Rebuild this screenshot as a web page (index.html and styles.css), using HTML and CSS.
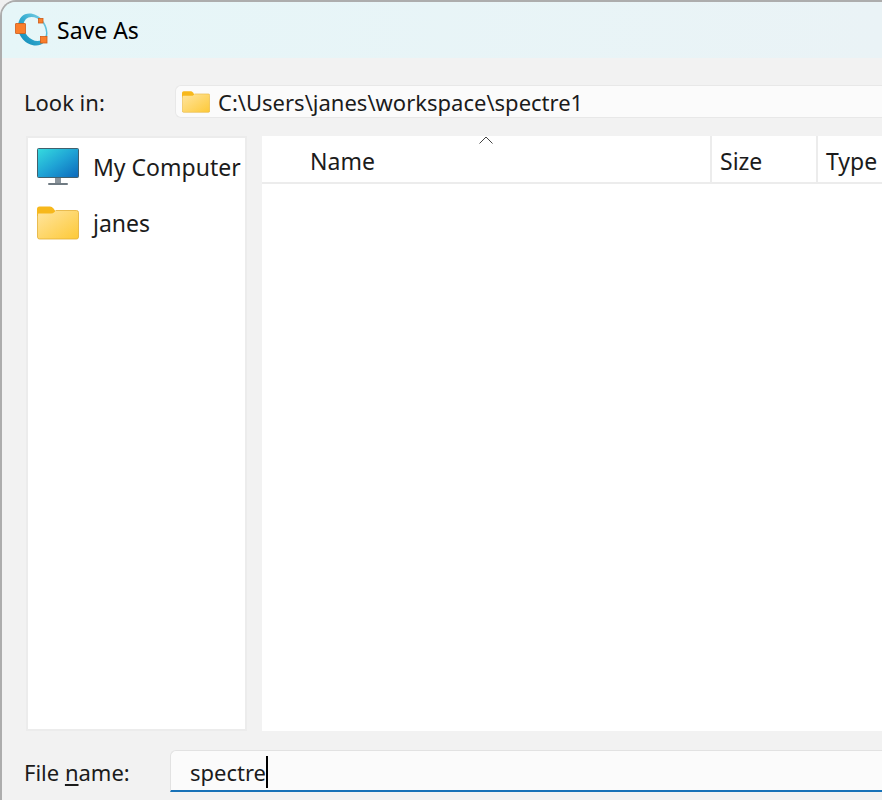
FILE: index.html
```html
<!DOCTYPE html>
<html lang="en">
<head>
<meta charset="utf-8">
<title>Save As</title>
<link rel="stylesheet" href="styles.css">
</head>
<body>
<svg class="defs" width="0" height="0" aria-hidden="true">
  <defs>
    <linearGradient id="folder-front" x1="0" y1="0" x2="1" y2="1">
      <stop offset="0" stop-color="#ffe5a0"/>
      <stop offset="1" stop-color="#fdc937"/>
    </linearGradient>
    <linearGradient id="screen" x1="0" y1="0" x2="1" y2="1">
      <stop offset="0" stop-color="#35dcdf"/>
      <stop offset="0.5" stop-color="#1fa3d5"/>
      <stop offset="1" stop-color="#0c68bb"/>
    </linearGradient>
    <linearGradient id="ring" x1="0" y1="1" x2="1" y2="0">
      <stop offset="0" stop-color="#0b86b4"/>
      <stop offset="0.5" stop-color="#35acd0"/>
      <stop offset="1" stop-color="#8ed8ea"/>
    </linearGradient>
    <symbol id="folder" viewBox="0 0 42 34">
      <path d="M0 9V3Q0 .5 2.500 .5H13Q15 .5 16.500 2.500L19 6V10H0Z" fill="#f7b81c"/>
      <path d="M.5 8.500Q.5 7.500 2 7.500H14Q16 7.500 17.500 6L19 4.500H39.500Q41.500 4.500 41.500 6.500V31Q41.500 33 39.500 33H2.500Q.5 33 .5 31Z" fill="url(#folder-front)"/>
      <path d="M18.500 4.500H39.500Q41.500 4.500 41.500 6.500V31Q41.500 33 39.500 33H2.500Q.5 33 .5 31V8" fill="none" stroke="#e3ae33" stroke-width=".8"/>
    </symbol>
  </defs>
</svg>
<main class="dialog">
  <header class="titlebar">
    <svg class="logo" viewBox="0 0 34 34" aria-hidden="true">
      <path fill-rule="evenodd" fill="url(#ring)" d="M3 13C3.500 5 8 .5 14.500 .5C24 .5 32.500 10 32.500 20C32.500 28 27.500 32.500 21 32.500C11 32.500 2.500 23 3 13ZM8.500 11.500C8 20 15 28 22.500 28C28 28 31 25 31 19.500C30.500 11 24 4 16.500 4C12 4 9 7 8.500 11.500Z"/>
      <g fill="#fb7e2b" stroke="#cf5c18" stroke-width=".8">
        <rect x=".5" y="10.500" width="10" height="10" rx=".5"/>
        <rect x="23.500" y="5.500" width="4.500" height="4.500"/>
        <rect x="25.500" y="23.500" width="6.500" height="6.500"/>
      </g>
    </svg>
    <h1>Save As</h1>
  </header>
  <form class="form">
    <div class="row look-row">
      <label for="look">Look in:</label>
      <div class="look-field">
        <svg class="small-folder" viewBox="0 0 42 34" preserveAspectRatio="none" aria-hidden="true"><use href="#folder"/></svg>
        <select id="look"><option>C:\Users\janes\workspace\spectre1</option></select>
      </div>
    </div>
    <div class="panels">
      <nav class="places" aria-label="Places">
        <button type="button" class="place">
          <svg viewBox="0 0 42 38" aria-hidden="true">
            <path d="M18 29H24V36H18Z" fill="#8b949b"/>
            <rect x=".5" y=".5" width="41" height="29" rx="1" fill="url(#screen)" stroke="#41606d"/>
            <rect x="11" y="35" width="20" height="2" rx="1" fill="#6f7a82"/>
          </svg>
          <span>My Computer</span>
        </button>
        <button type="button" class="place">
          <svg viewBox="0 0 42 34" aria-hidden="true"><use href="#folder"/></svg>
          <span>janes</span>
        </button>
      </nav>
      <div class="files">
        <table>
          <thead>
            <tr>
              <th class="name" aria-sort="ascending">Name
                <svg class="sort" viewBox="0 0 14 8" aria-hidden="true"><path d="M.5 7.500L7 1L13.500 7.500" fill="none" stroke="#444"/></svg>
              </th>
              <th class="size">Size</th>
              <th class="type">Type</th>
            </tr>
          </thead>
        </table>
      </div>
    </div>
    <div class="row name-row">
      <label for="file">File <u>n</u>ame:</label>
      <div class="name-field"><input id="file" type="text" value="spectre" size="7"></div>
    </div>
  </form>
</main>
</body>
</html>
```
FILE: styles.css
```css
* {
  box-sizing: border-box;
}

body {
  margin: 0;
  background: #f0f0f0;
  color: #1b1b1b;
  font: 23px/32px "Noto Sans", "Open Sans", sans-serif;
  overflow: hidden;
}

.defs {
  position: absolute;
}

.dialog {
  display: flex;
  flex-direction: column;
  height: 100vh;
  border: 2px solid #adadad;
  border-width: 2px 0 0 2px;
  border-radius: 16px 0 0 0;
  background: #f2f2f2;
  overflow: hidden;
}

.titlebar {
  display: flex;
  align-items: center;
  gap: 8px;
  height: 56px;
  padding-left: 13px;
  background: linear-gradient(90deg, #e6f6f8, #eaf3f6);
}

.logo {
  width: 34px;
  height: 34px;
}

h1 {
  margin: 0;
  color: #000;
  font-size: 23px;
  font-weight: 400;
}

.form {
  flex: 1;
  display: flex;
  flex-direction: column;
  min-height: 0;
  padding: 27px 0 8px 22px;
}

.row {
  display: flex;
  align-items: center;
  font-size: 22px;
}

.look-row label {
  width: 151px;
}

.look-field {
  flex: 1;
  display: flex;
  align-items: center;
  gap: 8px;
  height: 33px;
  padding-left: 6px;
  border: 1px solid #e8e8e8;
  border-right: 0;
  border-radius: 6px 0 0 6px;
  background: #fbfbfb;
}

.small-folder {
  width: 28px;
  height: 22px;
}

select,
input {
  margin: 0;
  padding: 0;
  border: 0;
  outline: 0;
  background: none;
  color: inherit;
  font: inherit;
  appearance: none;
}

select {
  flex: 1;
  height: 32px;
}

.panels {
  flex: 1;
  display: flex;
  gap: 15px;
  min-height: 0;
  margin: 18px 0 19px 2px;
}

.places {
  width: 221px;
  padding: 10px 0 0 9px;
  border: 2px solid #ececec;
  background: #fff;
}

.place {
  display: flex;
  align-items: center;
  gap: 14px;
  width: 100%;
  height: 38px;
  margin-bottom: 18px;
  padding: 0;
  border: 0;
  background: none;
  color: inherit;
  font: inherit;
  white-space: nowrap;
}

.place svg {
  flex: none;
  width: 42px;
}

.files {
  flex: 1;
  background: #fff;
}

table {
  width: 100%;
  border-collapse: collapse;
  table-layout: fixed;
}

th {
  position: relative;
  height: 47px;
  padding: 4px 0 0 8px;
  border-bottom: 2px solid #ececec;
  border-left: 2px solid #ececec;
  font-weight: 400;
  text-align: left;
}

th.name {
  padding-left: 48px;
  border-left: 0;
}

th.size {
  width: 106px;
}

th.type {
  width: 65px;
}

.sort {
  position: absolute;
  top: 0;
  left: 50%;
  width: 14px;
  height: 8px;
  margin-left: -7px;
}

.name-row label {
  width: 146px;
}

.name-row label,
.name-field {
  padding-top: 2px;
}

u {
  text-underline-offset: 3px;
}

.name-field {
  flex: 1;
  display: flex;
  height: 42px;
  padding: 5px 0 2px 19px;
  border-top: 1px solid #e2e2e2;
  border-left: 1px solid #e2e2e2;
  border-bottom: 2px solid #1872b8;
  border-radius: 6px 0 0 0;
  background: #fbfbfb;
}

/* The field hugs its text so the right edge reads as the caret. */
input {
  field-sizing: content;
  height: 32px;
  border-right: 2px solid #000;
}
```
